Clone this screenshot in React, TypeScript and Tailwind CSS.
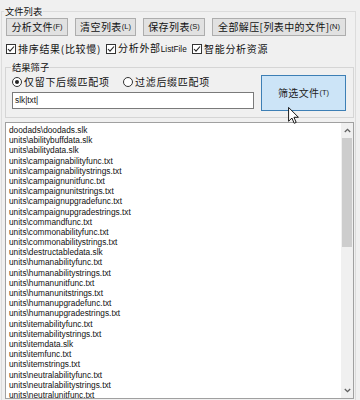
import React from "react";

const CJK = "font-['Noto_Sans_CJK_SC','Noto_Sans',sans-serif]";
const LAT = "font-['Liberation_Sans',Arial,sans-serif]";

const files = [
  "doodads\\doodads.slk",
  "units\\abilitybuffdata.slk",
  "units\\abilitydata.slk",
  "units\\campaignabilityfunc.txt",
  "units\\campaignabilitystrings.txt",
  "units\\campaignunitfunc.txt",
  "units\\campaignunitstrings.txt",
  "units\\campaignupgradefunc.txt",
  "units\\campaignupgradestrings.txt",
  "units\\commandfunc.txt",
  "units\\commonabilityfunc.txt",
  "units\\commonabilitystrings.txt",
  "units\\destructabledata.slk",
  "units\\humanabilityfunc.txt",
  "units\\humanabilitystrings.txt",
  "units\\humanunitfunc.txt",
  "units\\humanunitstrings.txt",
  "units\\humanupgradefunc.txt",
  "units\\humanupgradestrings.txt",
  "units\\itemabilityfunc.txt",
  "units\\itemabilitystrings.txt",
  "units\\itemdata.slk",
  "units\\itemfunc.txt",
  "units\\itemstrings.txt",
  "units\\neutralabilityfunc.txt",
  "units\\neutralabilitystrings.txt",
  "units\\neutralunitfunc.txt",
];

function Btn({ label, hot, w }: { label: string; hot: string; w: string }) {
  return (
    <div
      className={`${w} h-[18px] shrink-0 flex items-center justify-center bg-[#e1e1e1] border border-[#adadad] text-[#111]`}
    >
      <span className={`${CJK} text-[10px] tracking-[0.4px] leading-none`}>{label}</span>
      <span className={`${LAT} text-[7.5px] leading-none`}>{hot}</span>
    </div>
  );
}

function Check({ children, w }: { children: React.ReactNode; w: string }) {
  return (
    <div className={`${w} shrink-0 flex items-center gap-[2px]`}>
      <div className="w-[10px] h-[10px] border border-[#333] bg-white flex items-center justify-center shrink-0">
        <svg width="8" height="8" viewBox="0 0 8 8">
          <path d="M1 4 L3 6.2 L7 1.5" fill="none" stroke="#222" strokeWidth="1.1" />
        </svg>
      </div>
      <span className={`${CJK} text-[10px] tracking-[0.7px] leading-none text-[#111] whitespace-nowrap`}>
        {children}
      </span>
    </div>
  );
}

function Radio({ on, label, w }: { on?: boolean; label: string; w: string }) {
  return (
    <div className={`${w} shrink-0 flex items-center gap-[2px]`}>
      <div className="w-[10px] h-[10px] rounded-full border border-[#333] bg-white flex items-center justify-center shrink-0">
        {on && <div className="w-[4px] h-[4px] rounded-full bg-[#222]" />}
      </div>
      <span className={`${CJK} text-[10px] tracking-[0.7px] leading-none text-[#111] whitespace-nowrap`}>
        {label}
      </span>
    </div>
  );
}

export default function App() {
  return (
    <div className="relative w-[360px] h-[400px] overflow-hidden bg-[#f0f0f0] pt-[5px]">
      <fieldset className="ml-[1px] w-[355px] border border-[#dcdcdc] pb-[20px]">
        <legend className={`${CJK} ml-[2px] px-[1px] text-[9.3px] leading-[13px] text-[#111]`}>文件列表</legend>

        <div className="flex gap-[7px] pl-[4px]">
          <Btn label="分析文件" hot="(F)" w="w-[62px]" />
          <Btn label="清空列表" hot="(L)" w="w-[61px]" />
          <Btn label="保存列表" hot="(S)" w="w-[62px]" />
          <Btn label="全部解压[列表中的文件]" hot="(N)" w="w-[134px]" />
        </div>

        <div className="mt-[7px] h-[12px] pl-[4px] flex items-center">
          <Check w="w-[100px]">排序结果(比较慢)</Check>
          <Check w="w-[86px]">
            分析外部<span className={`${LAT} text-[8.2px] tracking-normal`}>ListFile</span>
          </Check>
          <Check w="w-[90px]">智能分析资源</Check>
        </div>

        <fieldset className="mt-[6px] ml-[3px] mr-[1px] border border-[#d5d5d5] pb-[6px]">
          <legend className={`${CJK} ml-[5px] px-[1px] text-[9.3px] leading-[12px] text-[#111]`}>结果筛子</legend>
          <div className="flex pl-[6px]">
            <div className="flex flex-col w-[242px]">
              <div className="mt-[3px] h-[12px] flex items-center">
                <Radio on label="仅留下后缀匹配项" w="w-[111px]" />
                <Radio label="过滤后缀匹配项" w="w-[110px]" />
              </div>
              <div className="mt-[4px] h-[17px] border border-[#7a7a7a] bg-white flex items-center pl-[2px]">
                <span className={`${LAT} text-[8.3px] leading-none text-[#111]`}>slk|txt|</span>
              </div>
            </div>
            <div className="ml-[7px] mt-[2px] w-[85px] h-[36px] bg-[#cce4f7] border border-[#3d7fb5] flex items-center justify-center text-[#222]">
              <span className={`${CJK} text-[10px] tracking-[0.4px] leading-none`}>筛选文件</span>
              <span className={`${LAT} text-[7.5px] leading-none`}>(T)</span>
            </div>
          </div>
        </fieldset>

        <div className="mt-[4px] ml-[3px] mr-[1px] h-[277px] border border-[#a0a0a0] bg-white flex">
          <div className="flex-1 pt-[2px] pl-[3px] overflow-hidden">
            {files.map((f) => (
              <div key={f} className={`${LAT} text-[8.3px] leading-[10.2px] h-[10.2px] text-[#111] whitespace-nowrap`}>
                {f}
              </div>
            ))}
          </div>
          <div className="w-[12px] bg-[#f0f0f0] flex flex-col">
            <div className="h-[15px] flex items-center justify-center">
              <svg width="7" height="5" viewBox="0 0 7 5">
                <path d="M0.8 4 L3.5 1.3 L6.2 4" fill="none" stroke="#606060" strokeWidth="1.3" />
              </svg>
            </div>
            <div className="mx-[1px] h-[109px] bg-[#cdcdcd]" />
            <div className="flex-1" />
            <div className="h-[15px] flex items-center justify-center">
              <svg width="7" height="5" viewBox="0 0 7 5">
                <path d="M0.8 1 L3.5 3.7 L6.2 1" fill="none" stroke="#606060" strokeWidth="1.3" />
              </svg>
            </div>
          </div>
        </div>
      </fieldset>

      <svg className="absolute left-[288px] top-[107px]" width="11" height="17" viewBox="0 0 12 19">
        <path d="M0.5 0.5 L0.5 16 L4.2 12.3 L6.8 18.2 L9 17.2 L6.5 11.5 L11.5 11.5 Z" fill="#fff" stroke="#000" strokeWidth="1" strokeLinejoin="round" />
      </svg>
    </div>
  );
}
